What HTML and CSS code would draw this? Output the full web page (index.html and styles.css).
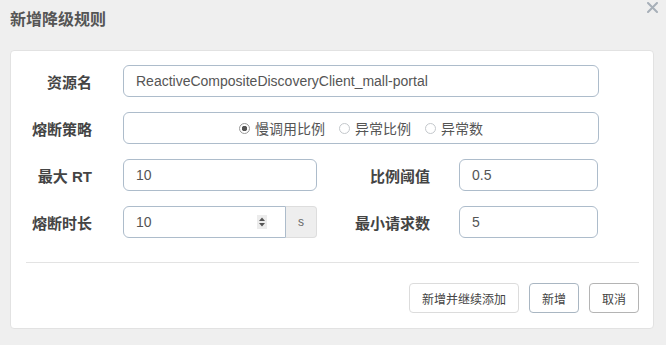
FILE: index.html
```html
<!DOCTYPE html>
<html lang="zh-CN">
<head>
    <meta charset="UTF-8">
    <title>新增降级规则</title>
    <link rel="stylesheet" href="styles.css">
</head>
<body>
    <!-- Dialog header -->
    <div class="dialog-head">
        <h3 class="dialog-title">新增降级规则</h3>
        <svg class="close-icon" width="11" height="11" viewBox="0 0 11 11">
            <path d="M1 1 L10 10 M10 1 L1 10" stroke="#a7afb8" stroke-width="2" stroke-linecap="round"/>
        </svg>
    </div>

    <!-- Rule form -->
    <div class="panel">
        <div class="form">
            <div class="row row-full">
                <label class="label">资源名</label>
                <div class="field">ReactiveCompositeDiscoveryClient_mall-portal</div>
            </div>

            <div class="row row-full">
                <label class="label">熔断策略</label>
                <div class="field radios">
                    <span class="radio"><i class="dot checked"></i>慢调用比例</span>
                    <span class="radio"><i class="dot"></i>异常比例</span>
                    <span class="radio"><i class="dot"></i>异常数</span>
                </div>
            </div>

            <div class="row row-half">
                <label class="label">最大 RT</label>
                <div class="field">10</div>
                <label class="label label-right">比例阈值</label>
                <div class="field">0.5</div>
            </div>

            <div class="row row-half">
                <label class="label">熔断时长</label>
                <div class="group">
                    <div class="field field-left">
                        <span>10</span>
                        <svg class="spin" width="10" height="14" viewBox="0 0 10 14">
                            <rect width="10" height="14" fill="#ececec"/>
                            <path d="M5 2.5 L8 6 L2 6 Z M5 11.5 L8 8 L2 8 Z" fill="#555"/>
                        </svg>
                    </div>
                    <span class="addon">s</span>
                </div>
                <label class="label label-right">最小请求数</label>
                <div class="field">5</div>
            </div>
        </div>

        <div class="divider"></div>

        <!-- Footer buttons -->
        <div class="actions">
            <button class="btn">新增并继续添加</button>
            <button class="btn btn-primary">新增</button>
            <button class="btn btn-cancel">取消</button>
        </div>
    </div>
</body>
</html>
```

FILE: styles.css
```css
/* Page */
body {
    margin: 0;
    background: #efefef;
    font-family: "Liberation Sans", "Noto Sans CJK SC", sans-serif;
    color: #555;
}

/* Dialog header */
.dialog-head {
    height: 50px;
    display: flex;
    justify-content: space-between;
    align-items: flex-start;
    padding: 0 8px 0 10px;
}

.dialog-title {
    margin: 6px 0 0;
    font-size: 16px;
    font-weight: bold;
    color: #555;
}

.close-icon {
    margin-top: 2px;
}

/* White panel */
.panel {
    margin-left: 10px;
    width: 644px;
    height: 279px;
    background: #fff;
    border: 1px solid #e2e2e2;
    border-radius: 4px;
    box-sizing: border-box;
    padding-top: 14px;
}

.form {
    display: flex;
    flex-direction: column;
    gap: 15px;
}

.row {
    display: grid;
    align-items: center;
}

.row-full {
    grid-template-columns: 112px 476px;
}

.row-half {
    grid-template-columns: 112px 194px 142px 139px;
}

.label {
    text-align: right;
    padding-right: 31px;
    font-size: 15px;
    font-weight: bold;
    color: #444;
    font-family: "Liberation Sans", "Noto Sans CJK SC", sans-serif;
}

.label-right {
    padding-right: 29px;
}

/* Inputs */
.field {
    height: 32px;
    box-sizing: border-box;
    border: 1px solid #adbccb;
    border-radius: 6px;
    padding: 0 12px;
    display: flex;
    align-items: center;
    font-size: 14px;
    color: #555;
}

.radios {
    justify-content: center;
    gap: 14px;
    font-size: 14px;
    font-family: "Noto Sans CJK SC", sans-serif;
}

.radio {
    display: flex;
    align-items: center;
    gap: 5px;
}

.dot {
    width: 11px;
    height: 11px;
    box-sizing: border-box;
    border: 1px solid #c4c8cc;
    border-radius: 50%;
    background: #fff;
}

.dot.checked {
    border-color: #9a9a9a;
    background: radial-gradient(circle, #555 0 2.5px, #fff 3px);
}

.group {
    display: flex;
}

.field-left {
    flex: 1;
    justify-content: space-between;
    border-radius: 6px 0 0 6px;
    padding-right: 18px;
}

.addon {
    width: 31px;
    height: 32px;
    box-sizing: border-box;
    display: flex;
    align-items: center;
    justify-content: center;
    background: #eee;
    border: 1px solid #ddd;
    border-left: none;
    border-radius: 0 4px 4px 0;
    font-size: 12px;
    color: #666;
}

.divider {
    margin: 24px 14px 0 15px;
    border-top: 1px solid #e3e3e3;
}

/* Footer */
.actions {
    display: flex;
    justify-content: flex-end;
    gap: 10px;
    padding: 20px 14px 0 0;
}

.btn {
    height: 30px;
    padding: 0 12px;
    background: #fff;
    border: 1px solid #dcdcdc;
    border-radius: 4px;
    font-size: 12px;
    font-family: "Noto Sans CJK SC", sans-serif;
    color: #444;
}

.btn-primary {
    border-color: #a9b6c2;
}

.btn-cancel {
    border-color: #b4b4b4;
}
```
